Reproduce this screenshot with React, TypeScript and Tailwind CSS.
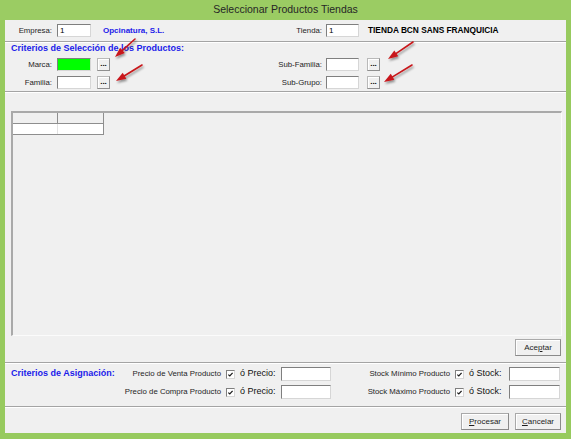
import React from "react";
import clsx from "clsx";

type Pt = [number, number];

// Red pointer arrow: thin shaft ending in a filled head at `tip`
function Arrow({ tail, tip }: { tail: Pt; tip: Pt }) {
  const dx = tip[0] - tail[0];
  const dy = tip[1] - tail[1];
  const len = Math.hypot(dx, dy);
  const ux = dx / len;
  const uy = dy / len;
  const headLen = 10;
  const half = 3.5;
  const bx = tip[0] - ux * headLen;
  const by = tip[1] - uy * headLen;
  const px = -uy;
  const py = ux;
  const head = `${tip[0]},${tip[1]} ${bx + px * half},${by + py * half} ${bx - px * half},${by - py * half}`;
  return (
    <g filter="url(#arrowShadow)">
      <line x1={tail[0]} y1={tail[1]} x2={bx} y2={by} stroke="#c8161a" strokeWidth={1.6} strokeLinecap="round" />
      <polygon points={head} fill="#c8161a" />
    </g>
  );
}

function TextBox({ className, children }: { className?: string; children?: React.ReactNode }) {
  return (
    <div
      className={clsx(
        "h-[13px] border border-[#d6d6d6] border-t-[#7f7f7f] border-l-[#7f7f7f] text-[8px] leading-[11px] pl-[2px] text-black",
        className ?? "bg-white"
      )}
    >
      {children}
    </div>
  );
}

function DotsButton({ className }: { className?: string }) {
  return (
    <div
      className={clsx(
        "w-[13px] h-[13px] bg-[#f0f0f0] border border-[#b9b9b9] border-b-[#8f8f8f] border-r-[#8f8f8f] shadow-[inset_1px_1px_0_#ffffff] flex items-end justify-center text-[8px] leading-[8px] pb-[2px] text-black font-bold",
        className
      )}
    >
      ...
    </div>
  );
}

function CheckBox() {
  return (
    <div className="w-[9px] h-[9px] bg-white border border-[#7f7f7f] border-b-[#d6d6d6] border-r-[#d6d6d6] flex items-center justify-center">
      <svg width="7" height="7" viewBox="0 0 7 7">
        <path d="M1.3 3.6 L2.8 5 L5.6 1.8" fill="none" stroke="#1a1a1a" strokeWidth="1.2" />
      </svg>
    </div>
  );
}

function PushButton({ className, children }: { className?: string; children: React.ReactNode }) {
  return (
    <div
      className={clsx(
        "h-[17px] bg-[#f0f0f0] border border-[#a9a9a9] border-b-[#8a8a8a] border-r-[#8a8a8a] shadow-[inset_1px_1px_0_#ffffff] flex items-center justify-center text-[8px] text-[#1e1e1e]",
        className
      )}
    >
      {children}
    </div>
  );
}

function Separator() {
  return <div className="h-[2px] border-t border-t-[#a4a4a4] border-b border-b-white" />;
}

const label = "text-[7.8px] text-[#1e1e1e] text-right whitespace-nowrap";
const heading = "text-[9px] font-bold text-[#1b1bea] whitespace-nowrap";

export default function App() {
  return (
    <div className="relative w-[571px] h-[439px] bg-[#97ca5e] flex flex-col font-['Liberation_Sans',Arial,sans-serif] overflow-hidden">
      {/* title bar */}
      <div className="h-[20px] flex items-center justify-center text-[10.5px] text-[#262626] bg-[#9bcc63]">
        Seleccionar Productos Tiendas
      </div>

      {/* client area */}
      <div className="mx-[5px] h-[413px] bg-[#f0f0f0] flex flex-col">
        {/* company / store */}
        <div className="h-[21px] flex items-center">
          <div className="w-[265px] flex items-center">
            <span className={clsx(label, "w-[47px]")}>Empresa:</span>
            <TextBox className="ml-[5px] w-[34px] bg-white">1</TextBox>
            <span className="ml-[12px] text-[8px] font-bold text-[#1b1bea] whitespace-nowrap">Opcinatura, S.L.</span>
          </div>
          <div className="flex items-center">
            <span className={clsx(label, "w-[52px]")}>Tienda:</span>
            <TextBox className="ml-[4px] w-[33px] bg-white">1</TextBox>
            <span className="ml-[9px] text-[8.3px] font-bold text-black whitespace-nowrap">TIENDA BCN SANS FRANQUICIA</span>
          </div>
        </div>
        <Separator />

        {/* product selection criteria */}
        <div className="h-[48px] flex flex-col">
          <div className={clsx(heading, "h-[12px] pl-[6px] flex items-center")}>Criterios de Selección de los Productos:</div>
          <div className="h-[19px] flex items-center">
            <div className="w-[265px] flex items-center">
              <span className={clsx(label, "w-[47px]")}>Marca:</span>
              <TextBox className="ml-[5px] w-[34px] bg-[#00ff00]" />
              <DotsButton className="ml-[6px]" />
            </div>
            <div className="flex items-center">
              <span className={clsx(label, "w-[52px]")}>Sub-Familia:</span>
              <TextBox className="ml-[4px] w-[33px] bg-white" />
              <DotsButton className="ml-[8px]" />
            </div>
          </div>
          <div className="h-[17px] flex items-center">
            <div className="w-[265px] flex items-center">
              <span className={clsx(label, "w-[47px]")}>Familia:</span>
              <TextBox className="ml-[5px] w-[34px] bg-white" />
              <DotsButton className="ml-[6px]" />
            </div>
            <div className="flex items-center">
              <span className={clsx(label, "w-[52px]")}>Sub-Grupo:</span>
              <TextBox className="ml-[4px] w-[33px] bg-white" />
              <DotsButton className="ml-[8px]" />
            </div>
          </div>
        </div>
        <Separator />

        {/* results grid */}
        <div className="h-[269px] flex flex-col pt-[18px]">
          <div className="ml-[6px] w-[551px] h-[225px] border-t-2 border-l-2 border-t-[#a9a9a9] border-l-[#a9a9a9] border-r border-b border-r-[#fbfbfb] border-b-[#fbfbfb]">
            <div className="w-[91px] border-r border-b border-[#8e8e8e]">
              <div className="flex h-[11px] border-b border-[#8e8e8e]">
                <div className="w-[45px] border-r border-[#8e8e8e]" />
                <div className="flex-1" />
              </div>
              <div className="flex h-[10px] bg-white">
                <div className="w-[45px] border-r border-[#e2e2e2]" />
                <div className="flex-1" />
              </div>
            </div>
          </div>
          <div className="mt-[3px] flex justify-end pr-[5px]">
            <PushButton className="w-[46px]">
              <span>
                Ace<span className="underline">p</span>tar
              </span>
            </PushButton>
          </div>
        </div>
        <Separator />

        {/* assignment criteria */}
        <div className="h-[42px] pt-[1px] flex flex-col">
          {[
            { left: "Precio de Venta Producto", right: "Stock Mínimo Producto", title: true },
            { left: "Precio de Compra Producto", right: "Stock Máximo Producto", title: false },
          ].map((r) => (
            <div key={r.left} className="h-[18px] pl-[6px] flex items-center">
              <div className="w-[210px] flex items-center justify-between">
                <span className={heading}>{r.title ? "Criterios de Asignación:" : ""}</span>
                <span className={label}>{r.left}</span>
              </div>
              <div className="ml-[5px]">
                <CheckBox />
              </div>
              <span className="ml-[5px] w-[41px] text-[9px] text-[#111111] whitespace-nowrap">ó Precio:</span>
              <TextBox className="w-[50px] h-[14px] bg-white" />
              <span className={clsx(label, "w-[119px]")}>{r.right}</span>
              <div className="ml-[5px]">
                <CheckBox />
              </div>
              <span className="ml-[5px] w-[40px] text-[9px] text-[#111111] whitespace-nowrap">ó Stock:</span>
              <TextBox className="w-[51px] h-[14px] bg-white" />
            </div>
          ))}
        </div>
        <Separator />

        {/* dialog buttons */}
        <div className="h-[25px] pt-[5px] pr-[5px] flex justify-end gap-[6px]">
          <PushButton className="w-[48px]">
            <span>
              <span className="underline">P</span>rocesar
            </span>
          </PushButton>
          <PushButton className="w-[46px]">
            <span>
              <span className="underline">C</span>ancelar
            </span>
          </PushButton>
        </div>
      </div>

      {/* annotation arrows over the form */}
      <svg className="absolute inset-0 pointer-events-none" width="571" height="439">
        <defs>
          <filter id="arrowShadow" x="-50%" y="-50%" width="200%" height="200%">
            <feDropShadow dx="1" dy="2" stdDeviation="1.2" floodColor="#000" floodOpacity="0.4" />
          </filter>
        </defs>
        <Arrow tail={[135, 39]} tip={[115, 57]} />
        <Arrow tail={[142, 65]} tip={[116, 81]} />
        <Arrow tail={[413, 42]} tip={[388, 59]} />
        <Arrow tail={[412, 65]} tip={[384, 82]} />
      </svg>
    </div>
  );
}
